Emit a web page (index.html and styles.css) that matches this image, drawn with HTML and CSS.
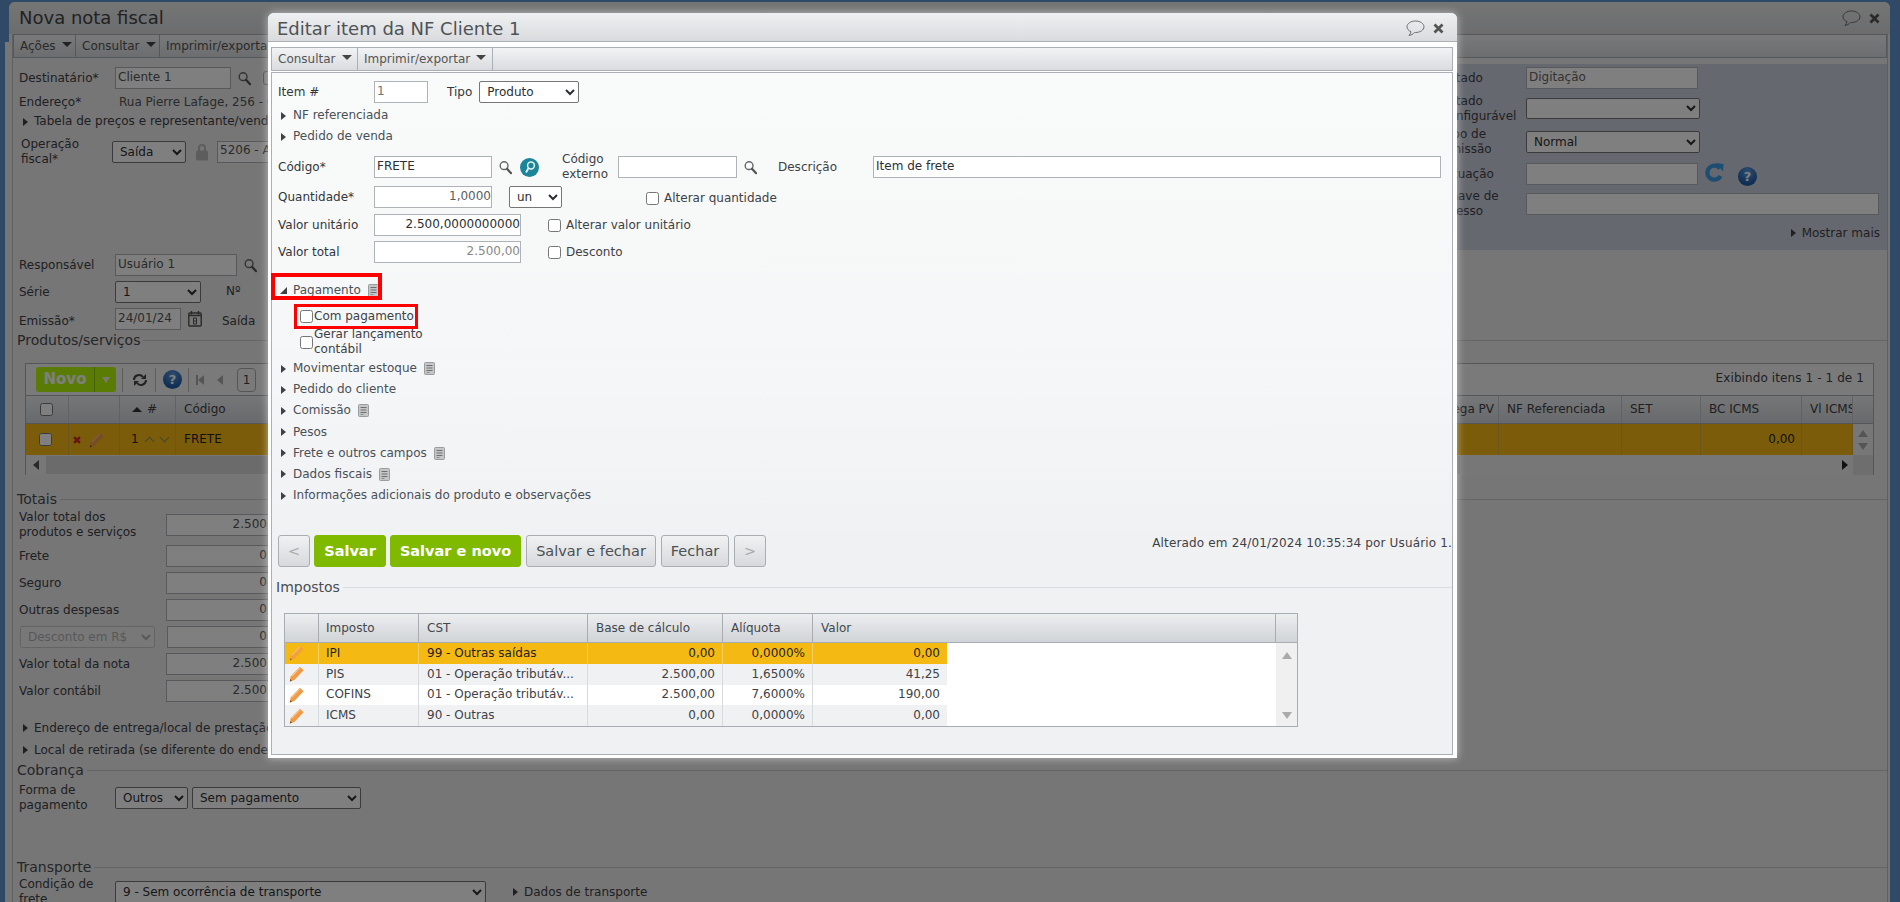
FILE: index.html
```html
<!DOCTYPE html>
<html lang="pt-BR">
<head>
<meta charset="utf-8">
<title>Nova nota fiscal</title>
<link rel="stylesheet" href="styles.css">
</head>
<body>
<svg class="defs" width="0" height="0" aria-hidden="true">
  <symbol id="mag" viewBox="0 0 14 15"><circle cx="5.5" cy="5.5" r="4.2" fill="#fff" fill-opacity=".25" stroke="#666" stroke-width="1.5"/><path d="M8.6 8.8 13 13.6" stroke="#555" stroke-width="2.4" stroke-linecap="round"/></symbol>
  <symbol id="note" viewBox="0 0 11 13"><rect x=".5" y=".5" width="10" height="12" rx="1" fill="#c4c6c8" stroke="#9a9c9e"/><path d="M2.5 3.5h6M2.5 6h6M2.5 8.5h6" stroke="#6c6e70" stroke-width="1"/><rect x="2.5" y="10" width="3" height="1" fill="#8a8c8e"/></symbol>
  <symbol id="pencil" viewBox="0 0 15 16"><path d="M10.800 .8 14.600 4.300 5.400 14 .8 15.600 1.600 10.600Z" fill="#f09a45"/><path d="M10.800 1.800 2.800 10.400" stroke="#f7c48e" stroke-width="1.200"/><path d="M.8 15.600 1.200 13 3.200 14.800Z" fill="#7a5a30"/></symbol>
  <symbol id="bubble" viewBox="0 0 19 17"><path d="M9.5 1C4.8 1 1 3.6 1 6.8c0 2.1 1.6 3.9 4 4.9-.3 1.500-1 2.700-2 3.800 2.300-.4 4.200-1.500 5.500-3h1c4.700 0 8.500-2.500 8.500-5.700S14.200 1 9.500 1Z" fill="none" stroke="#6a6d70" stroke-width="1"/></symbol>
  <symbol id="cross" viewBox="0 0 11 11"><path d="M1.500 1.500 9.500 9.500M9.500 1.500 1.500 9.500" stroke="#555" stroke-width="2.800"/></symbol>
  <symbol id="cross-red" viewBox="0 0 11 11"><path d="M1.500 1.500 9.500 9.500M9.500 1.500 1.500 9.500" stroke="#c8262a" stroke-width="3.200"/></symbol>
  <symbol id="lens" viewBox="0 0 19 19"><circle cx="9.500" cy="9.500" r="9.500" fill="#1c8598"/><circle cx="11" cy="7.500" r="3.400" fill="none" stroke="#e6f4f6" stroke-width="1.500"/><path d="M8.600 10 6 14.500" stroke="#e6f4f6" stroke-width="1.800"/></symbol>
  <symbol id="lock" viewBox="0 0 12 18"><path d="M3 8V5a3 3 0 0 1 6 0v3" fill="none" stroke="#bbb" stroke-width="2"/><rect y="7.500" width="12" height="10" rx="1.500" fill="#bbb"/></symbol>
  <symbol id="cal" viewBox="0 0 14 16"><rect x=".8" y="2" width="12.400" height="13" rx="1" fill="none" stroke="#555" stroke-width="1.400"/><path d="M3.500 0v3.500M10.500 0v3.500M1 4.500h12" stroke="#555" stroke-width="1.400"/><path d="M5.500 7h3v6h-3zM5.500 10h3" fill="none" stroke="#555"/></symbol>
  <symbol id="refresh" viewBox="0 0 19 19"><path d="M15 5.500A7 7 0 1 0 15.500 13" fill="none" stroke="#3a9ae0" stroke-width="4.200"/><path d="M11 0 18.500 1 18 8.500Z" fill="#3a9ae0"/></symbol>
  <symbol id="sync" viewBox="0 0 16 14"><path d="M2 7a5 5 0 0 1 9-3" fill="none" stroke="#444" stroke-width="2"/><path d="M14 7a5 5 0 0 1-9 3" fill="none" stroke="#444" stroke-width="2"/><path d="M9 6h5V1Z M7 8H2v5Z" fill="#444"/></symbol>
</svg>

<div class="page">
  <div class="window">
    <div class="win-head">
      <span class="win-title">Nova nota fiscal</span>
      <span class="head-icons"><svg class="i-bubble"><use href="#bubble"/></svg><svg class="i-cross"><use href="#cross"/></svg></span>
    </div>
    <div class="toolbar bg-toolbar">
      <span class="tb-item tb-a">Ações<i class="caret"></i></span>
      <span class="tb-item tb-b">Consultar<i class="caret"></i></span>
      <span class="tb-item">Imprimir/exportar<i class="caret"></i></span>
    </div>

    <div class="form-top">
      <div class="top-left">
        <div class="row row-first">
          <span class="lbl">Destinatário*</span><input class="field w116" value="Cliente 1" readonly>
          <svg class="i-mag ml7"><use href="#mag"/></svg><i class="stub"></i>
        </div>
        <div class="row row-addr"><span class="lbl">Endereço*</span><span class="addr">Rua Pierre Lafage, 256 - Centro</span></div>
        <div class="row row-tab"><i class="tw tw-bg"></i><span>Tabela de preços e representante/vendedor</span></div>
        <div class="row row-op">
          <span class="lbl lbl-op">Operação<br>fiscal*</span>
          <select class="sel w74"><option>Saída</option></select>
          <svg class="i-lock"><use href="#lock"/></svg>
          <input class="field w200" value="5206 - Anulação" readonly>
        </div>
      </div>
      <div class="top-right">
        <div class="rrow rrow-1"><span class="rlbl">Estado</span><input class="field w172 muted" value="Digitação" readonly></div>
        <div class="rrow rrow-2"><span class="rlbl">Estado<br>configurável</span><select class="sel w174 h21"><option></option></select></div>
        <div class="rrow rrow-3"><span class="rlbl">Tipo de<br>emissão</span><select class="sel w174"><option>Normal</option></select></div>
        <div class="rrow rrow-4"><span class="rlbl">Situação</span><input class="field w172" readonly><svg class="i-refresh"><use href="#refresh"/></svg><span class="help help-r">?</span></div>
        <div class="rrow rrow-5"><span class="rlbl">Chave de<br>acesso</span><input class="field w353" readonly></div>
        <div class="more"><i class="tw tw-bg"></i>Mostrar mais</div>
      </div>
    </div>

    <div class="form-body">
      <div class="row row-resp"><span class="lbl">Responsável</span><input class="field w122" value="Usuário 1" readonly><svg class="i-mag ml7"><use href="#mag"/></svg></div>
      <div class="row row-s5"><span class="lbl">Série</span><select class="sel w86"><option>1</option></select><span class="nr">Nº</span></div>
      <div class="row row-s5"><span class="lbl low">Emissão*</span><input class="field w66" value="24/01/24" readonly><svg class="i-cal"><use href="#cal"/></svg><span class="saida low">Saída</span></div>

      <div class="sect sect-prod"><span>Produtos/serviços</span></div>
      <div class="bg-table">
        <div class="bt-tools">
          <span class="novo"><b>Novo</b><i class="novo-caret"></i></span>
          <i class="bt-sep"></i><svg class="i-sync"><use href="#sync"/></svg>
          <i class="bt-sep"></i><span class="help">?</span>
          <i class="bt-sep"></i><span class="pg-first"></span><span class="pg-prev"></span><span class="pg-box">1</span>
          <span class="bt-count">Exibindo itens 1 - 1 de 1</span>
        </div>
        <div class="bt-grid bt-head">
          <span class="c-chk"><input type="checkbox"></span>
          <span></span>
          <span class="c-num"><i class="sort-up"></i>#</span>
          <span>Código</span>
          <span class="c-end">Entrega PV</span>
          <span>NF Referenciada</span>
          <span>SET</span>
          <span>BC ICMS</span>
          <span class="c-clip">Vl ICMS</span>
          <span class="c-last"></span>
        </div>
        <div class="bt-grid bt-row">
          <span class="c-chk"><input type="checkbox"></span>
          <span class="c-act"><svg class="i-x"><use href="#cross-red"/></svg><svg class="i-pen"><use href="#pencil"/></svg></span>
          <span class="c-ord">1<i class="chev chev-up"></i><i class="chev chev-down"></i></span>
          <span>FRETE</span>
          <span></span><span></span><span></span>
          <span class="c-right">0,00</span>
          <span></span>
          <span class="c-scroll"><i class="sc-up"></i><i class="sc-down"></i></span>
        </div>
        <div class="bt-hscroll">
          <i class="hs-left"></i><i class="hs-thumb"></i><i class="hs-right"></i><i class="hs-corner"></i>
        </div>
      </div>

      <div class="sect sect-tot"><span>Totais</span></div>
      <div class="row row-t1"><span class="lbl lbl-t">Valor total dos<br>produtos e serviços</span><input class="field num w121" value="2.500,00" readonly></div>
      <div class="row row-t2"><span class="lbl lbl-t">Frete</span><input class="field num w121" value="0,00" readonly></div>
      <div class="row row-t3"><span class="lbl lbl-t">Seguro</span><input class="field num w121" value="0,00" readonly></div>
      <div class="row row-t3"><span class="lbl lbl-t">Outras despesas</span><input class="field num w121" value="0,00" readonly></div>
      <div class="row row-t3"><select class="sel sel-dis" disabled><option>Desconto em R$</option></select><input class="field num w120" value="0,00" readonly></div>
      <div class="row row-t4"><span class="lbl lbl-t">Valor total da nota</span><input class="field num w121" value="2.500,00" readonly></div>
      <div class="row row-t5"><span class="lbl lbl-t">Valor contábil</span><input class="field num w121" value="2.500,00" readonly></div>
      <div class="row row-link row-link-1"><i class="tw tw-bg"></i><span>Endereço de entrega/local de prestação</span></div>
      <div class="row row-link row-link-2"><i class="tw tw-bg"></i><span>Local de retirada (se diferente do endereço)</span></div>
      <div class="sect sect-cob"><span>Cobrança</span></div>
      <div class="row row-pay"><span class="lbl">Forma de<br>pagamento</span><select class="sel w73"><option>Outros</option></select><select class="sel w169"><option>Sem pagamento</option></select></div>
      <div class="sect sect-tra"><span>Transporte</span></div>
      <div class="row row-fre"><span class="lbl">Condição de<br>frete</span><select class="sel w371"><option>9 - Sem ocorrência de transporte</option></select><i class="tw tw-bg tw-fre"></i><span>Dados de transporte</span></div>
    </div>
  </div>
</div>

<div class="overlay"></div>

<div class="modal">
  <div class="modal-head">
    <span class="modal-title">Editar item da NF Cliente 1</span>
    <span class="head-icons"><svg class="i-bubble"><use href="#bubble"/></svg><svg class="i-cross"><use href="#cross"/></svg></span>
  </div>
  <div class="toolbar modal-toolbar">
    <span class="tb-item tb-c">Consultar<i class="caret"></i></span>
    <span class="tb-item tb-d">Imprimir/exportar<i class="caret"></i></span>
  </div>
  <div class="panel">
    <div class="mrow mrow-item">
      <span class="mlbl">Item #</span><input class="field w54 dim-item" value="1" readonly>
      <span class="tipo">Tipo</span><select class="sel w100"><option>Produto</option></select>
    </div>
    <div class="tree tree-nf"><i class="tw"></i>NF referenciada</div>
    <div class="tree tree-ped"><i class="tw"></i>Pedido de venda</div>

    <div class="mrow mrow-cod">
      <span class="mlbl">Código*</span><input class="field w118 dark" value="FRETE" readonly>
      <svg class="i-mag ml7"><use href="#mag"/></svg><svg class="i-lens"><use href="#lens"/></svg>
      <span class="ext">Código<br>externo</span><input class="field w119" readonly>
      <svg class="i-mag ml7"><use href="#mag"/></svg>
      <span class="desc">Descrição</span><input class="field w568 dark" value="Item de frete" readonly>
    </div>
    <div class="mrow mrow-qtd">
      <span class="mlbl">Quantidade*</span><input class="field num w118 dim-text" value="1,0000" readonly>
      <select class="sel w53"><option>un</option></select>
      <label class="chk chk-q"><input type="checkbox">Alterar quantidade</label>
    </div>
    <div class="mrow mrow-uni">
      <span class="mlbl">Valor unitário</span><input class="field num w147 dark" value="2.500,0000000000" readonly>
      <label class="chk chk-v"><input type="checkbox">Alterar valor unitário</label>
    </div>
    <div class="mrow mrow-tot">
      <span class="mlbl">Valor total</span><input class="field num w147 gray" value="2.500,00" readonly>
      <label class="chk chk-v"><input type="checkbox">Desconto</label>
    </div>

    <div class="tree tree-pag"><i class="tw-open"></i>Pagamento<svg class="i-note"><use href="#note"/></svg></div>
    <label class="chk chk-pay chk-com"><input type="checkbox"><span>Com pagamento</span></label>
    <label class="chk chk-pay chk-ger"><input type="checkbox"><span>Gerar lançamento<br>contábil</span></label>

    <div class="tree-list">
      <div class="tree"><i class="tw"></i>Movimentar estoque<svg class="i-note"><use href="#note"/></svg></div>
      <div class="tree"><i class="tw"></i>Pedido do cliente</div>
      <div class="tree"><i class="tw"></i>Comissão<svg class="i-note"><use href="#note"/></svg></div>
      <div class="tree"><i class="tw"></i>Pesos</div>
      <div class="tree"><i class="tw"></i>Frete e outros campos<svg class="i-note"><use href="#note"/></svg></div>
      <div class="tree"><i class="tw"></i>Dados fiscais<svg class="i-note"><use href="#note"/></svg></div>
      <div class="tree"><i class="tw"></i>Informações adicionais do produto e observações</div>
    </div>

    <div class="actions">
      <button class="btn btn-nav">&lt;</button>
      <button class="btn btn-go btn-salvar">Salvar</button>
      <button class="btn btn-go btn-novo">Salvar e novo</button>
      <button class="btn btn-sf">Salvar e fechar</button>
      <button class="btn btn-fe">Fechar</button>
      <button class="btn btn-nav btn-nav-r">&gt;</button>
      <span class="stamp">Alterado em 24/01/2024 10:35:34 por Usuário 1.</span>
    </div>

    <div class="sect sect-imp"><span>Impostos</span></div>

    <div class="tax">
      <div class="tax-head">
        <span></span><span>Imposto</span><span>CST</span><span>Base de cálculo</span><span>Alíquota</span><span>Valor</span><span></span>
      </div>
      <div class="tax-body">
        <div class="tax-rows">
          <div class="tax-row sel-row"><span class="pen"><svg class="i-pen"><use href="#pencil"/></svg></span><span>IPI</span><span>99 - Outras saídas</span><span class="r">0,00</span><span class="r">0,0000%</span><span class="r">0,00</span></div>
          <div class="tax-row alt"><span class="pen"><svg class="i-pen"><use href="#pencil"/></svg></span><span>PIS</span><span>01 - Operação tributáv...</span><span class="r">2.500,00</span><span class="r">1,6500%</span><span class="r">41,25</span></div>
          <div class="tax-row"><span class="pen"><svg class="i-pen"><use href="#pencil"/></svg></span><span>COFINS</span><span>01 - Operação tributáv...</span><span class="r">2.500,00</span><span class="r">7,6000%</span><span class="r">190,00</span></div>
          <div class="tax-row alt"><span class="pen"><svg class="i-pen"><use href="#pencil"/></svg></span><span>ICMS</span><span>90 - Outras</span><span class="r">0,00</span><span class="r">0,0000%</span><span class="r">0,00</span></div>
        </div>
        <div class="tax-scroll"><i class="sc-up"></i><i class="sc-down"></i></div>
      </div>
    </div>
  </div>
  <div class="mark mark-a"></div>
  <div class="mark mark-b"></div>
</div>
</body>
</html>
```

FILE: styles.css
```css
* { box-sizing: border-box; }
html, body { margin: 0; height: 902px; overflow: hidden; }
body { font: 12px/15px "DejaVu Sans", Verdana, sans-serif; color: #3e4146; background: #5f93cf; }
.defs { position: absolute; }
svg { display: block; flex: none; }
i { display: block; flex: none; }

/* background page */
.page { height: 902px; padding: 2px 10px 0 9px; overflow: hidden; background: linear-gradient(#ececec, #ececec) 5px 42px / 4px 100% no-repeat; }
.window { height: 900px; background: linear-gradient(#bcbec0, #bcbec0) 3px 32px / 1px 100% no-repeat, linear-gradient(#bcbec0, #bcbec0) right 2px top 32px / 1px 100% no-repeat, #ececec; border-radius: 6px 6px 0 0; padding: 0 3px 0 4px; overflow: hidden; }
.win-head { height: 32px; margin: 0 -3px 0 -4px; padding: 0 10px; display: flex; align-items: center; justify-content: space-between; background: linear-gradient(#eaebec, #d8d9db); }
.win-title { font-size: 18px; line-height: 28px; color: #444; }
.head-icons { display: flex; align-items: center; gap: 8px; }
.i-bubble { width: 19px; height: 17px; }
.i-cross { width: 11px; height: 11px; }

.toolbar { display: flex; align-items: stretch; background: linear-gradient(#f2f3f4, #d9dbde); border: 1px solid #aab0b6; }
.bg-toolbar { height: 24px; }
.tb-item { display: flex; align-items: center; padding: 0 5px 0 6px; border-right: 1px solid #aab0b6; color: #555; }
.caret { width: 0; height: 0; border: 5px solid transparent; border-top: 5px solid #444; border-bottom: 0; margin-left: 6px; margin-top: -3px; }
.tb-a { width: 62px; }
.tb-b { width: 84px; }
.tb-c { width: 86px; }
.tb-d { width: 135px; }

.form-top { display: flex; height: 193px; padding-top: 6px; margin-top: 0; }
.top-left { width: 1417px; flex: none; padding-top: 3px; }
.top-right { flex: 1; background: #cdd0de; margin-top: 0; padding-top: 2px; height: 186px; position: relative; }
.row { display: flex; align-items: center; padding-left: 6px; color: #3e4146; }
.lbl { width: 96px; flex: none; }
.low { padding-top: 5px; }
.stub { width: 14px; height: 14px; margin-left: 12px; border: 1px solid #999; border-radius: 3px; }
.row-first { height: 22px; }
.row-addr { height: 22px; margin-top: 2px; }
.addr { margin-left: 4px; color: #555; white-space: nowrap; }
.row-tab { height: 19px; margin-top: -1px; padding-left: 10px; }
.row-tab .tw, .row-link .tw { margin-left: 0; margin-right: 6px; }
.row-op { height: 23px; margin-top: 9px; }
.lbl-op { width: 91px; margin-left: 2px; }
.ml7 { margin-left: 7px; }
.i-mag { width: 13px; height: 15px; }
.i-lock { width: 12px; height: 18px; margin: 0 9px 0 10px; }
.i-note { width: 11px; height: 13px; margin-left: 7px; }

.field { height: 22px; border: 1px solid #aeb3b8; background: #fff; font: inherit; color: #555; padding: 0 2px 3px; border-radius: 0; outline: 0; }
.num { text-align: right; padding-right: 0; }
.muted { color: #666; }
.dark { color: #2c2f33; }
.gray { color: #888; }
.dim-text { color: #5a5d62; }
.dim-item { color: #6f7277; }
.sel { height: 22px; font: inherit; color: #2c2f33; background: #fff; border: 1px solid #767676; border-radius: 2px; padding: 0 0 0 3px; }
.h21 { height: 21px; }
.w54 { width: 54px; } .w53 { width: 53px; } .w66 { width: 66px; } .w73 { width: 73px; } .w74 { width: 74px; }
.w86 { width: 86px; } .w100 { width: 100px; } .w116 { width: 116px; } .w118 { width: 118px; } .w119 { width: 119px; }
.w120 { width: 120px; } .w121 { width: 121px; } .w122 { width: 122px; } .w147 { width: 147px; } .w169 { width: 169px; }
.w172 { width: 172px; } .w174 { width: 174px; } .w200 { width: 200px; } .w353 { width: 353px; } .w371 { width: 371px; } .w568 { width: 568px; }

.rrow { display: flex; align-items: center; white-space: nowrap; padding-left: 12px; }
.rlbl { width: 84px; flex: none; color: #3e4146; }
.rrow-1 { height: 22px; margin-top: 1px; }
.rrow-2 { height: 21px; margin-top: 9px; }
.rrow-3 { height: 22px; margin-top: 12px; }
.rrow-4 { height: 22px; margin-top: 10px; }
.rrow-5 { height: 22px; margin-top: 8px; }
.i-refresh { width: 19px; height: 19px; margin: -4px 0 0 7px; }
.more { display: flex; align-items: center; justify-content: flex-end; height: 18px; margin-top: 9px; padding-right: 7px; }
.more .tw { margin-right: 6px; }

.help { width: 19px; height: 19px; border-radius: 50%; background: radial-gradient(circle at 50% 25%, #5b9ae0, #1e5da8 70%); color: #fff; font-weight: 700; font-size: 13px; line-height: 19px; text-align: center; display: block; flex: none; }
.help-r { margin: 4px 0 0 14px; }

.form-body { position: relative; }
.row-resp { height: 22px; margin-top: 3px; }
.row-s5 { height: 22px; margin-top: 5px; }
.nr { margin-left: 25px; margin-top: -2px; }
.i-cal { width: 14px; height: 16px; margin: 0 0 0 7px; }
.saida { margin-left: 20px; }

.sect { display: flex; align-items: center; height: 18px; font-size: 14px; color: #4a4d52; padding-left: 4px; }
.sect::after { content: ""; flex: 1; height: 1px; background: #c8cbce; margin-left: 3px; }
.sect-prod { margin-top: 1px; }
.sect-tot { margin-top: 15px; }
.sect-cob { margin-top: 2px; }
.sect-tra { margin-top: 49px; }

.bg-table { margin: 14px 0 0 12px; width: 1849px; height: 112px; border: 1px solid #a8adb3; background: #f5f5f5; }
.bt-tools { height: 32px; display: flex; align-items: center; padding-left: 10px; position: relative; background: #f4f5f6; border-bottom: 1px solid #a8adb3; }
.novo { width: 80px; height: 25px; border-radius: 3px; background: #b4f80a; display: flex; color: #fff; }
.novo b { width: 58px; text-align: center; font-size: 15px; line-height: 25px; }
.novo-caret { width: 22px; border-left: 1px solid #8fc400; position: relative; }
.novo-caret::after { content: ""; position: absolute; left: 7px; top: 10px; border: 4px solid transparent; border-top: 6px solid #eef5d8; border-bottom: 0; }
.bt-sep { width: 1px; height: 24px; background: #bbb; margin: 0 7px 0 6px; }
.i-sync { width: 16px; height: 14px; margin: 0 1px 0 2px; }
.pg-first, .pg-prev { width: 0; height: 0; border: 5px solid transparent; border-right: 6px solid #aaa; border-left: 0; }
.pg-first { margin-left: 2px; position: relative; }
.pg-first::before { content: ""; position: absolute; left: -2px; top: -5px; width: 2px; height: 10px; background: #aaa; }
.pg-prev { margin-left: 13px; }
.pg-box { width: 19px; height: 24px; margin-left: 14px; border: 1px solid #aaa; border-radius: 4px; text-align: center; line-height: 22px; }
.bt-count { position: absolute; right: 9px; top: 7px; letter-spacing: .1px; }
.bt-grid { display: grid; grid-template-columns: 43px 51px 56px 1254px 69px 123px 79px 101px 51px 20px; }
.bt-grid > span { display: flex; align-items: center; padding-left: 8px; border-right: 1px solid #c0c4c8; overflow: hidden; white-space: nowrap; }
.bt-head { height: 28px; background: linear-gradient(#eceef0, #d0d3d7); border-bottom: 1px solid #a8adb3; }
.bt-row { height: 31px; background: #f5b914; }
.bt-row > span { color: #222; border-right-color: #d7ad3c; }
.bt-grid input { margin: 0; }
.bt-grid > .c-chk { padding-left: 14px; }
.bt-row > .c-chk { padding-left: 13px; }
.bt-grid > .c-end { justify-content: flex-end; padding: 0 4px 0 0; }
.bt-grid > .c-right { justify-content: flex-end; padding: 0 6px 0 0; }
.bt-grid > .c-last { border-right: 0; }
.bt-grid > .c-clip { padding-right: 0; }
.bt-grid > .c-num { padding-left: 12px; }
.sort-up { width: 0; height: 0; border: 5px solid transparent; border-bottom: 5px solid #333; border-top: 0; margin-right: 5px; }
.c-act { gap: 8px; padding-left: 4px !important; }
.i-x { width: 8px; height: 8px; }
.i-pen { width: 15px; height: 16px; }
.bt-grid > .c-ord { padding-left: 11px; }
.chev { width: 7px; height: 7px; border-left: 1.500px solid #8a8f55; border-top: 1.500px solid #8a8f55; flex: none; }
.chev-up { transform: rotate(45deg); margin: 4px 0 0 7px; }
.chev-down { transform: rotate(225deg); margin: -4px 0 0 8px; }
.bt-grid > .c-scroll { flex-direction: column; justify-content: center; gap: 6px; padding: 0; border: 0; background: #f0efef; }
.sc-up { width: 0; height: 0; border: 5px solid transparent; border-bottom: 7px solid #aaa; border-top: 0; }
.sc-down { width: 0; height: 0; border: 5px solid transparent; border-top: 7px solid #aaa; border-bottom: 0; }
.bt-hscroll { height: 20px; display: flex; align-items: center; background: #eee; position: relative; padding-left: 7px; }
.hs-left { width: 0; height: 0; border: 5px solid transparent; border-right: 6px solid #555; border-left: 0; margin-right: 7px; }
.hs-thumb { width: 1414px; height: 18px; background: #d6d6d6; }
.hs-right { width: 0; height: 0; border: 5px solid transparent; border-left: 6px solid #222; border-right: 0; margin-left: auto; margin-right: 5px; }
.hs-corner { width: 20px; height: 20px; background: #dcdcdc; }

.lbl-t { width: 147px; }
.row-t1 { height: 22px; margin-top: 6px; }
.row-t2 { height: 22px; margin-top: 9px; }
.row-t3 { height: 22px; margin-top: 5px; }
.row-t4 { height: 22px; margin-top: 5px; }
.row-t5 { height: 22px; margin-top: 5px; }
.sel-dis { width: 135px; margin: 0 12px 0 1px; background: #f3f3f3; color: #999; border-color: #bbb; }
.row-link { padding-left: 10px; height: 18px; white-space: nowrap; }
.row-link-1 { margin-top: 17px; }
.row-link-2 { margin-top: 4px; }
.row-pay { height: 22px; margin-top: 8px; }
.row-pay .sel + .sel { margin-left: 4px; }
.row-fre { height: 22px; margin-top: 5px; }

.tw { width: 0; height: 0; border: 4.500px solid transparent; border-left: 5px solid #3e4146; border-right: 0; margin: 0 7px 0 3px; }
.tw-open { width: 0; height: 0; border-style: solid; border-width: 0 0 7px 7px; border-color: transparent transparent #3e4146 transparent; margin: 0 6px 0 2px; }
.row-fre .tw-fre { margin: 0 6px 0 27px; }

.overlay { position: absolute; inset: 0; background: rgba(0, 0, 0, .5); }

/* modal */
.modal { position: absolute; left: 268px; top: 13px; width: 1189px; height: 745px; background: #fff; border-radius: 6px 6px 0 0; box-shadow: 0 0 9px rgba(255, 255, 255, .55); padding: 0 4px 0 3px; }
.modal-head { height: 29px; margin: 0 -4px 0 -3px; padding: 3px 13px 0 9px; display: flex; align-items: center; justify-content: space-between; background: linear-gradient(#eff0f1, #d9dbde); border-bottom: 1px solid #aab0b6; border-radius: 6px 6px 0 0; }
.modal-title { font-size: 18px; line-height: 24px; color: #4f5256; }
.modal-toolbar { height: 24px; margin-top: 5px; }
.panel { height: 683px; margin-top: 1px; border: 1px solid #aab0b6; background: linear-gradient(#f9fbfa, #f5f6f7 45%, #f0f1f3 70%); padding-left: 6px; position: relative; }
.mrow { display: flex; align-items: center; height: 22px; }
.mlbl { width: 96px; flex: none; color: #33363a; }
.mrow-item { margin-top: 8px; }
.tipo { margin: 0 7px 0 19px; color: #33363a; }
.tree { display: flex; align-items: center; height: 21px; color: #4a5058; white-space: nowrap; }
.tree-nf { margin-top: 2px; }
.tree-ped { margin-top: 0; }
.mrow-cod { margin-top: 9px; }
.i-lens { width: 19px; height: 19px; margin-left: 8px; }
.ext { margin-left: 23px; width: 56px; flex: none; }
.desc { margin-left: 21px; width: 95px; flex: none; }
.mrow-qtd { margin-top: 8px; }
.mrow-qtd .sel { margin-left: 17px; }
.chk { display: flex; align-items: center; color: #3e4146; white-space: nowrap; }
.chk input { margin: 0 5px 0 0; }
.chk-q { margin: 2px 0 0 84px; }
.chk-v { margin-left: 27px; }
.mrow-uni { margin-top: 6px; }
.mrow-tot { margin-top: 5px; }
.tree-pag { margin-top: 17px; height: 20px; }
.chk-pay { margin-left: 22px; }
.chk-pay input { margin-right: 1px; }
.chk-com { height: 20px; margin-top: 6px; }
.chk-ger { height: 30px; margin-top: 1px; }
.tree-list { margin-top: 1px; }
.tree-list .tree { height: 21.17px; }
.actions { display: flex; align-items: flex-start; margin-top: 29px; height: 32px; position: relative; }
.btn { height: 32px; font: 14.500px/30px "DejaVu Sans", Verdana, sans-serif; padding: 0; border: 1px solid #a9aeb3; border-radius: 3px; background: linear-gradient(#f0f1f2, #d7d9dc); color: #4c4f53; }
.btn-nav { width: 32px; color: #aaa; }
.btn-go { border-color: #80ba00; background: #80ba00; color: #fff; font-weight: 700; }
.btn-salvar { width: 72px; margin-left: 4px; }
.btn-novo { width: 131px; margin-left: 4px; }
.btn-sf { width: 130px; margin-left: 5px; }
.btn-fe { width: 68px; margin-left: 5px; }
.btn-nav-r { margin-left: 5px; }
.stamp { margin-left: auto; margin-top: 1px; white-space: nowrap; color: #3e4146; letter-spacing: .15px; }
.sect-imp { margin-top: 11px; padding-left: 0; margin-left: -2px; }
.sect-imp::after { background: #dadce0; }
.tax { width: 1014px; margin: 17px 0 0 6px; height: 114px; border: 1px solid #a8adb3; background: #fff; }
.tax-head { display: grid; grid-template-columns: 34px 100px 169px 135px 90px 463px 21px; height: 29px; background: linear-gradient(#eceef0, #d0d3d7); border-bottom: 1px solid #a8adb3; }
.tax-head > span { display: flex; align-items: center; padding-left: 8px; border-right: 1px solid #a8adb3; color: #44474c; }
.tax-head > span:nth-child(2) { padding-left: 7px; }
.tax-head > span:last-child { border-right: 0; }
.tax-body { display: flex; height: 83px; overflow: hidden; justify-content: space-between; }
.tax-row { display: grid; grid-template-columns: 34px 100px 169px 135px 90px 134px; height: 20.750px; background: #fff; }
.tax-row > span { display: flex; align-items: center; padding-left: 8px; border-right: 1px solid #d8dbde; color: #3e4146; white-space: nowrap; overflow: hidden; }
.tax-row > span:nth-child(2) { padding-left: 7px; }
.tax-row > span:last-child { border-right: 0; }
.tax-row > .r { justify-content: flex-end; padding: 0 7px 0 0; }
.tax-row > .pen { padding-left: 4px; }
.alt { background: #f0f1f3; }
.sel-row { background: #f5b914; }
.sel-row > span { color: #222; border-right-color: #f7cf60; }
.sel-row .i-pen { opacity: .75; }
.tax-scroll { width: 21px; background: #f1f0f0; display: flex; flex-direction: column; justify-content: space-between; align-items: center; padding: 9px 0 7px; }

/* red annotations over the form */
.mark { position: absolute; border: 4px solid #f00; }
.mark-a { left: 3px; top: 260px; width: 111px; height: 27px; }
.mark-b { left: 26px; top: 291px; width: 124px; height: 25px; border-width: 3.500px; }
```
